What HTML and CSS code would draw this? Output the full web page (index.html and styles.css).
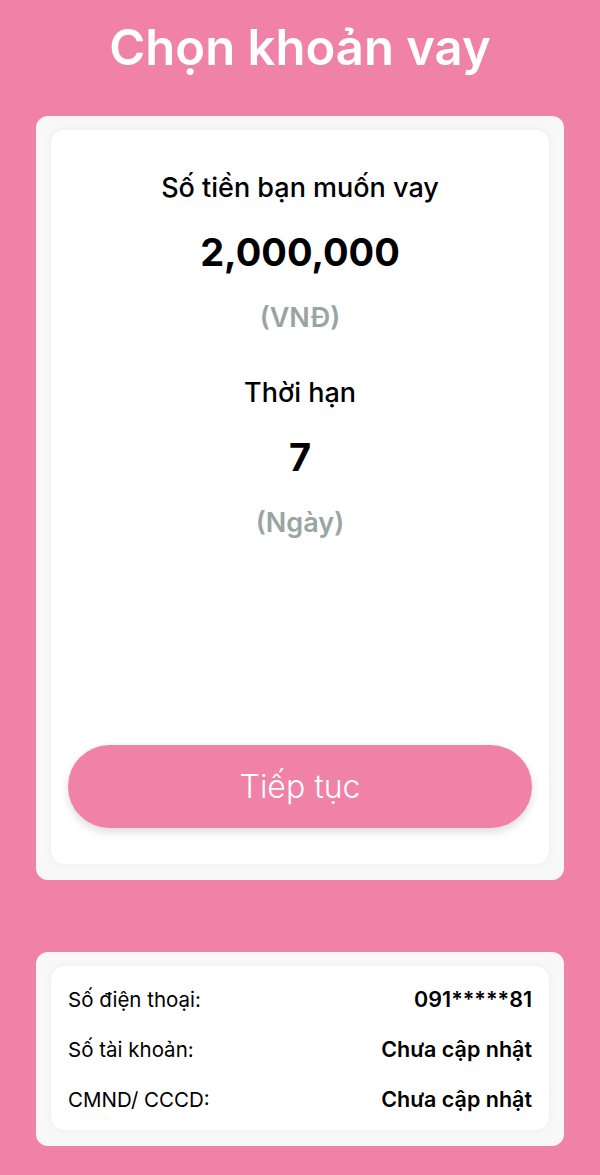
FILE: index.html
```html
<!DOCTYPE html>
<html lang="vi">
<head>
    <meta charset="UTF-8">
    <meta name="viewport" content="width=device-width, initial-scale=1.0">
    <title>Chọn khoản vay</title>
    <link rel="stylesheet" href="styles.css">
</head>
<body>
    <h1 class="page-title">Chọn khoản vay</h1>

    <div class="card">
        <div class="card-inner loan">
            <div class="loan-label first">Số tiền bạn muốn vay</div>
            <div class="loan-value">2,000,000</div>
            <div class="loan-unit">(VNĐ)</div>
            <div class="loan-label term">Thời hạn</div>
            <div class="loan-value">7</div>
            <div class="loan-unit">(Ngày)</div>
            <button class="next-btn">Tiếp tục</button>
        </div>
    </div>

    <div class="card info-card">
        <div class="card-inner info">
            <div class="info-row">
                <span class="info-label">Số điện thoại:</span>
                <span class="info-value">091*****81</span>
            </div>
            <div class="info-row">
                <span class="info-label">Số tài khoản:</span>
                <span class="info-value">Chưa cập nhật</span>
            </div>
            <div class="info-row">
                <span class="info-label">CMND/ CCCD:</span>
                <span class="info-value">Chưa cập nhật</span>
            </div>
        </div>
    </div>
</body>
</html>
```

FILE: styles.css
```css
body{
    margin:0;
    padding:0;
    box-sizing: border-box;
    background: #ef82a6;
    font-family: Inter, "Noto Sans", sans-serif;
    color: #000;
}

.page-title{
    margin:0;
    height:116px;
    line-height:96px;
    text-align: center;
    color: white;
    font-size: 49px;
    font-weight: 600;
}

.card{
    margin:0 36px;
    padding:14px 15px 16px;
    background: #f8f8f8;
    border-radius: 12px;
}

.card-inner{
    background: white;
    border-radius: 14px;
    box-shadow: 0 0 8px rgba(0,0,0,.05);
}

.loan{
    height:734px;
    box-sizing: border-box;
    display: flex;
    flex-direction: column;
    align-items: center;
    padding:38px 17px 36px;
}

.loan-label,
.loan-value,
.loan-unit{
    line-height:40px;
    text-align: center;
}

.loan-label{
    font-size: 27px;
    font-weight: 500;
}

.loan-label.term{
    margin-top:35px;
}

.loan-value{
    margin-top:24px;
    font-size: 38px;
    font-weight: 700;
}

.loan-unit{
    margin-top:26px;
    font-size: 27px;
    font-weight: 600;
    color: #98a5a3;
}

.next-btn{
    margin-top:auto;
    width:100%;
    height:83px;
    border:none;
    border-radius: 42px;
    background: #ef82a6;
    color: white;
    font-family: Inter, "Noto Sans", sans-serif;
    font-size: 32px;
    font-weight: 300;
    box-shadow: 0 4px 8px rgba(0,0,0,.14);
}

.info-card{
    margin-top:72px;
}

.info{
    height:164px;
    box-sizing: border-box;
    padding:8px 17px 0;
}

.info-row{
    display: flex;
    justify-content: space-between;
    align-items: baseline;
    height:50px;
    line-height:50px;
}

.info-label{
    font-size: 20.5px;
}

.info-value{
    font-size: 21.5px;
    font-weight: 600;
}
```
